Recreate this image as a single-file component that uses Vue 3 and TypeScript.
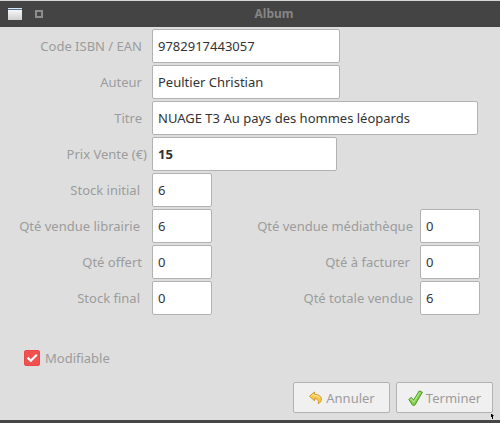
<script setup lang="ts">
import { reactive, ref } from 'vue'

interface Field {
  id: string
  label: string
  size: 'wide' | 'medium' | 'full' | 'small'
  gap?: 'tight' | 'loose'
  bold?: boolean
}

interface Row {
  main: Field
  side?: Field
}

const rows: Row[] = [
  { main: { id: 'isbn', label: 'Code ISBN / EAN', size: 'wide' } },
  { main: { id: 'author', label: 'Auteur', size: 'wide' } },
  { main: { id: 'title', label: 'Titre', size: 'full' } },
  { main: { id: 'price', label: 'Prix Vente (€)', size: 'medium', gap: 'tight', bold: true } },
  { main: { id: 'initial', label: 'Stock initial', size: 'small', gap: 'loose' } },
  {
    main: { id: 'shop', label: 'Qté vendue librairie', size: 'small', gap: 'loose' },
    side: { id: 'library', label: 'Qté vendue médiathèque', size: 'small' },
  },
  {
    main: { id: 'offered', label: 'Qté offert', size: 'small' },
    side: { id: 'invoice', label: 'Qté à facturer', size: 'small', gap: 'loose' },
  },
  {
    main: { id: 'final', label: 'Stock final', size: 'small', gap: 'loose' },
    side: { id: 'total', label: 'Qté totale vendue', size: 'small' },
  },
]

const album = reactive<Record<string, string>>({
  isbn: '9782917443057',
  author: 'Peultier Christian',
  title: 'NUAGE T3 Au pays des hommes léopards',
  price: '15',
  initial: '6',
  shop: '6',
  library: '0',
  offered: '0',
  invoice: '0',
  final: '0',
  total: '6',
})

const editable = ref(true)
</script>

<template>
  <main class="window">
    <header class="titlebar">
      <svg class="app-icon" viewBox="0 0 14 12" aria-hidden="true">
        <defs>
          <linearGradient id="pane" x1="0" y1="0" x2="0" y2="1">
            <stop offset="0" stop-color="#ffffff" />
            <stop offset="1" stop-color="#cfcfcf" />
          </linearGradient>
        </defs>
        <rect width="14" height="12" fill="url(#pane)" />
        <rect width="14" height="1" fill="#dfe6ee" />
        <rect y="1" width="14" height="1" fill="#4d6f96" />
      </svg>
      <svg class="max-icon" viewBox="0 0 8 8" aria-hidden="true">
        <rect x="1" y="1" width="6" height="6" fill="none" stroke="#8e8e8e" stroke-width="2" />
      </svg>
      <h1>Album</h1>
    </header>

    <form class="form" @submit.prevent>
      <div v-for="row in rows" :key="row.main.id" class="row">
        <label class="main-label" :class="row.main.gap" :for="row.main.id">{{ row.main.label }}</label>
        <input
          :id="row.main.id"
          v-model="album[row.main.id]"
          type="text"
          :class="[row.main.size, { bold: row.main.bold }]"
        />
        <template v-if="row.side">
          <label class="side-label" :class="row.side.gap" :for="row.side.id">{{ row.side.label }}</label>
          <input :id="row.side.id" v-model="album[row.side.id]" type="text" :class="row.side.size" />
        </template>
      </div>

      <div class="check">
        <span class="box">
          <input id="editable" v-model="editable" type="checkbox" />
          <svg v-if="editable" viewBox="0 0 16 16" aria-hidden="true">
            <path d="M3.6 7.6 L6.8 10.8 L12.8 4.8" fill="none" stroke="#ffffff" stroke-width="2.2" />
          </svg>
        </span>
        <label for="editable">Modifiable</label>
      </div>

      <footer class="actions">
        <button type="button">
          <svg class="icon" viewBox="0 0 16 16" aria-hidden="true">
            <path
              d="M1.5 6.2 L6.5 2 V4.4 C10.9 4.4 13.5 6.4 13.4 9.2 C13.3 11.2 12.1 12.8 10.1 13.8 C11 11.4 10.5 8.8 6.5 8.6 V10.8 Z"
              fill="#f6c94e"
              stroke="#d39a2b"
              stroke-width="1"
              stroke-linejoin="round"
            />
            <path d="M3.3 6.1 L5.7 4.2 V5.4 C8.5 5.3 10.9 6 11.9 7.8" fill="none" stroke="#fdeaa2" stroke-width="0.9" />
          </svg>
          Annuler
        </button>
        <button type="button">
          <svg class="icon" viewBox="0 0 16 16" aria-hidden="true">
            <path
              d="M0.8 9.4 L3.4 7.4 L5.6 10.2 L11.2 0.9 L14.4 2.2 L6.8 15.2 L4.6 15.2 Z"
              fill="#84d14c"
              stroke="#4a9a2a"
              stroke-width="1"
              stroke-linejoin="round"
            />
            <path d="M2.4 9.5 L3.3 8.9 L5.7 12 L11.7 2.3" fill="none" stroke="#c4f09c" stroke-width="0.9" />
          </svg>
          Terminer
        </button>
      </footer>
    </form>
    <svg class="grip" viewBox="0 0 3 5" aria-hidden="true">
      <path d="M0 0 H1 L3 2 H2 V5 H1 V3 H0 Z" fill="#000000" />
    </svg>
  </main>
</template>

<style>
body {
  margin: 0;
  background: #dedede;
}
</style>

<style scoped>
.window {
  position: relative;
  box-sizing: border-box;
  border-top: 1px solid #d3d8d6;
  border-bottom: 3px solid #464646;
  background: #dedede;
  color: #9c9c9c;
  font-family: "Noto Sans", "Open Sans", sans-serif;
  font-size: 13px;
  line-height: 18px;
}

.titlebar {
  display: flex;
  align-items: center;
  height: 26px;
  padding-left: 8px;
  background: #444444;
}

.app-icon {
  width: 14px;
  height: 12px;
}

.max-icon {
  width: 8px;
  height: 8px;
  margin: 0 5px 0 13px;
}

h1 {
  flex: 1;
  margin: 0;
  color: #858585;
  font-size: 12px;
  font-weight: 700;
  text-align: center;
}

.form {
  padding-top: 2px;
}

.row {
  display: flex;
  align-items: center;
  margin-bottom: 2px;
  padding-right: 20px;
}

.main-label,
.side-label {
  box-sizing: border-box;
  text-align: right;
  white-space: nowrap;
}

.main-label {
  flex: 0 0 152px;
  padding-right: 10px;
}

.side-label {
  flex: 1;
  padding-right: 7px;
}

.main-label.tight {
  padding-right: 5px;
}

.main-label.loose {
  padding-right: 12px;
}

.side-label.loose {
  padding-right: 10px;
}

.row input {
  box-sizing: border-box;
  min-width: 0;
  height: 34px;
  padding: 0 5px;
  border: 1px solid #b2b2b2;
  border-radius: 2px;
  background: #ffffff;
  color: #333333;
  font: inherit;
}

.row .small {
  width: 60px;
}

.row .medium {
  width: 185px;
}

.row .wide {
  width: 188px;
}

.row .full {
  flex: 1;
  margin-right: 2px;
}

.row .bold {
  font-weight: 700;
}

.check {
  display: flex;
  align-items: center;
  gap: 5px;
  margin-top: 34px;
  padding-left: 24px;
}

.box {
  display: grid;
  width: 16px;
  height: 16px;
}

.box > * {
  grid-area: 1 / 1;
  width: 16px;
  height: 16px;
}

.box input {
  appearance: none;
  margin: 0;
  border: 1px solid #b2b2b2;
  border-radius: 2px;
  background: #ffffff;
}

.box input:checked {
  border-color: #ea4848;
  background: #f05050;
}

.box svg {
  pointer-events: none;
}

.actions {
  display: flex;
  justify-content: flex-end;
  gap: 6px;
  padding: 15px 7px 7px;
}

button {
  display: flex;
  align-items: center;
  justify-content: center;
  gap: 2px;
  box-sizing: border-box;
  width: 97px;
  height: 31px;
  padding: 0;
  border: 1px solid #b2b2b2;
  border-radius: 2px;
  background: #f0f0f0;
  color: #9c9c9c;
  font: inherit;
}

.icon {
  width: 16px;
  height: 16px;
}

.grip {
  position: absolute;
  right: 6px;
  bottom: 1px;
  width: 3px;
  height: 5px;
}
</style>
